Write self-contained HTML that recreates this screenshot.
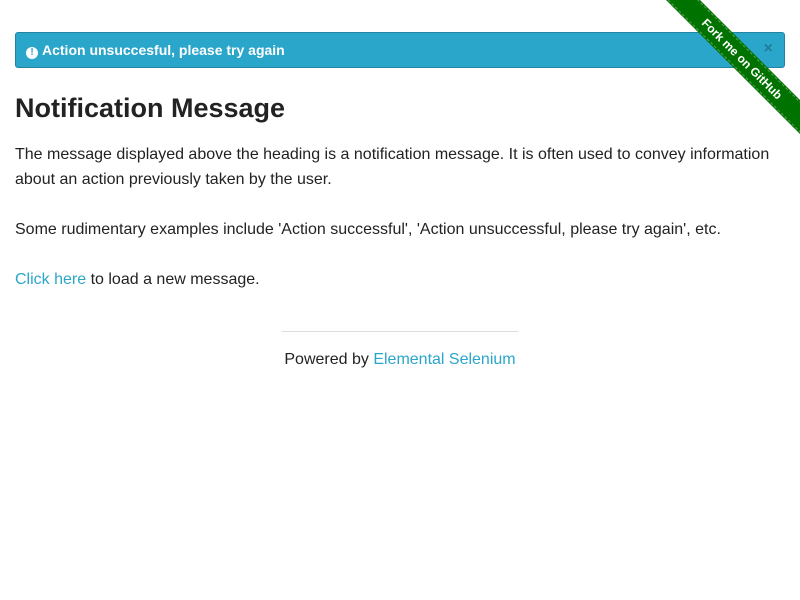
<!DOCTYPE html>
<html><head><style>
body{margin:0;background:#fff;font-family:"Liberation Sans",Arial,sans-serif;color:#222;overflow:hidden;width:800px;height:600px;position:relative}
.alert{position:absolute;left:15px;top:32px;width:768px;height:34px;background:#2ba6cb;border:1px solid #2284a1;border-radius:3px;color:#fff;font-weight:bold;font-size:14px;line-height:34px;box-sizing:content-box}
.alert .ic{display:inline-block;width:12px;height:12px;border-radius:50%;background:#fff;color:#2ba6cb;font-size:10px;line-height:12px;text-align:center;margin:0 4px 0 10px;vertical-align:-1px;position:relative;top:-1px}
.alert .x{position:absolute;right:11px;top:-1px;color:#1f7d9a;font-size:16px;font-weight:bold}
h3{position:absolute;left:15px;top:93px;margin:0;font-size:27px;font-weight:bold;color:#222}
p{position:absolute;left:15px;margin:0;font-size:16px;line-height:25px;width:770px}
a{color:#2ba6cb;text-decoration:none}
hr{position:absolute;left:282px;top:331px;width:236px;margin:0;border:0;border-top:1px solid #ddd}
.foot{position:absolute;left:0;width:800px;text-align:center;top:347px;font-size:16px;line-height:25px}
.rib{position:absolute;left:641.5px;top:46.5px;width:200px;height:24px;background:#007200;transform:rotate(45deg);color:#fff;font-size:12px;font-weight:bold;text-align:center;line-height:24px;outline:1px dashed rgba(255,255,255,.35);outline-offset:-2px}
</style></head><body>
<div class="alert"><span class="ic">!</span>Action unsuccesful, please try again<span class="x">×</span></div>
<h3>Notification Message</h3>
<p style="top:142px">The message displayed above the heading is a notification message. It is often used to convey information about an action previously taken by the user.</p>
<p style="top:217px">Some rudimentary examples include 'Action successful', 'Action unsuccessful, please try again', etc.</p>
<p style="top:267px"><a href="#">Click here</a> to load a new message.</p>
<hr>
<div class="foot">Powered by <a href="#">Elemental Selenium</a></div>
<div class="rib">Fork me on GitHub</div>
</body></html>
